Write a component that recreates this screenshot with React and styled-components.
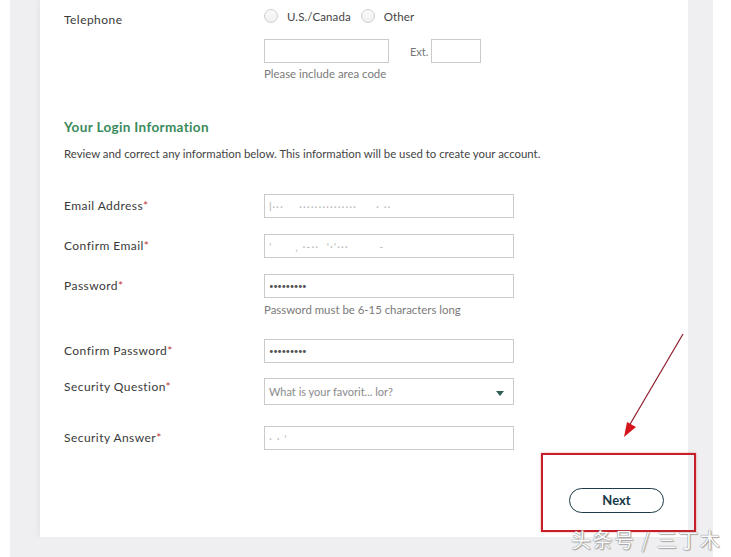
import React from 'react'
import styled, { createGlobalStyle } from 'styled-components'

const GlobalStyle = createGlobalStyle`
    html, body {
        margin: 0;
        padding: 0;
        background: #fff;
    }
    body {
        font-family: Lato, "Open Sans", Arial, sans-serif;
        color: #3b3b3b;
    }
`;

const Page = styled.div`
    position: relative;
    width: 731px;
    height: 557px;
    overflow: hidden;
`;

const Backdrop = styled.div`
    margin-left: 10px;
    width: 703px;
    height: 557px;
    background: #efeef0;
`;

const Panel = styled.div`
    margin-left: 30px;
    width: 648px;
    height: 537px;
    background: #fff;
    box-shadow: -3px 0 3px rgba(0, 0, 0, 0.03);
    padding: 9px 24px 0 24px;
    box-sizing: border-box;
`;

const Row = styled.div`
    display: grid;
    grid-template-columns: 200px 250px;
    align-items: ${p => p.$top ? 'start' : 'center'};
    margin-top: ${p => p.$mt || 0}px;
`;

const Label = styled.div`
    font-size: 12px;
    line-height: 16px;
    letter-spacing: 0.45px;
    color: #3a3a3a;
    padding-top: ${p => p.$pt || 0}px;
    span {
        color: #c23a3a;
    }
`;

const Field = styled.div`
    display: flex;
    flex-direction: column;
`;

const RadioGroup = styled.div`
    display: flex;
    align-items: center;
    height: 14px;
`;

const Radio = styled.span`
    width: 14px;
    height: 14px;
    border-radius: 50%;
    border: 1px solid #cfcfcf;
    box-sizing: border-box;
    background: linear-gradient(#fafafa, #f0f0f0);
    margin-right: 9px;
`;

const RadioText = styled.span`
    font-size: 11.5px;
    letter-spacing: 0.1px;
    color: #444;
    margin-right: 10px;
`;

const PhoneLine = styled.div`
    display: flex;
    align-items: center;
    margin-top: 16px;
`;

const Input = styled.div`
    width: ${p => p.$w || 250}px;
    height: ${p => p.$h || 24}px;
    border: 1px solid #cbcbcb;
    box-sizing: border-box;
    background: #fff;
    display: flex;
    align-items: center;
    padding: 0 6px 0 4px;
    font-size: ${p => p.$fs || 11}px;
    color: ${p => p.$c || '#555'};
    letter-spacing: ${p => p.$ls || 0}px;
    white-space: nowrap;
    overflow: hidden;
`;

const Ext = styled.span`
    font-size: 11px;
    color: #777;
    margin: 0 3px 0 21px;
`;

const Help = styled.div`
    font-size: 11.4px;
    line-height: 16px;
    color: #7a7a7a;
    margin-top: ${p => p.$mt || 3}px;
`;

const Heading = styled.h2`
    margin: 37px 0 0 0;
    font-size: 13.5px;
    line-height: 16px;
    font-weight: 700;
    color: #3b8a5c;
    letter-spacing: 0.35px;
`;

const Intro = styled.p`
    margin: 11px 0 0 0;
    font-size: 11.4px;
    line-height: 16px;
    color: #444;
`;

const Select = styled(Input)`
    justify-content: space-between;
    padding-right: 9px;
`;

const Caret = styled.span`
    width: 0;
    height: 0;
    border-left: 4px solid transparent;
    border-right: 4px solid transparent;
    border-top: 5px solid #2c5e54;
    margin-top: 3px;
`;

const Footer = styled.div`
    display: flex;
    justify-content: flex-end;
    margin-top: 38px;
`;

const NextButton = styled.button`
    width: 95px;
    height: 25px;
    border-radius: 13px;
    border: 1.5px solid #1e3a48;
    background: #fff;
    font-family: Lato, "Open Sans", Arial, sans-serif;
    font-weight: 700;
    font-size: 13px;
    line-height: 20px;
    color: #163848;
    padding: 0 0 2px 0;
`;

const Highlight = styled.div`
    position: absolute;
    left: 541px;
    top: 453px;
    width: 155px;
    height: 79px;
    border: 2px solid #c61f29;
    box-sizing: border-box;
    box-shadow: 0 0 2px rgba(220, 60, 60, 0.5);
`;

const Arrow = styled.svg`
    position: absolute;
    left: 615px;
    top: 330px;
`;

const Watermark = styled.div`
    position: absolute;
    left: 571px;
    top: 525px;
    font-family: "Noto Sans CJK SC", sans-serif;
    font-size: 20px;
    letter-spacing: 1.5px;
    color: #fbfbfb;
    text-shadow: 0 0 1px #8a8a8a, 0 0 1px #8a8a8a, 1px 1px 1px #aaa;
    white-space: nowrap;
`;

const Faint = styled.span`
    color: #bdbdbd;
    letter-spacing: 1px;
`;

function App() {
    return (
        <Page>
            <GlobalStyle />
            <Backdrop>
                <Panel>
                    <Row $top>
                        <Label $pt={3}>Telephone</Label>
                        <Field>
                            <RadioGroup>
                                <Radio />
                                <RadioText>U.S./Canada</RadioText>
                                <Radio />
                                <RadioText>Other</RadioText>
                            </RadioGroup>
                            <PhoneLine>
                                <Input $w={125} />
                                <Ext>Ext.</Ext>
                                <Input $w={50} />
                            </PhoneLine>
                            <Help>Please include area code</Help>
                        </Field>
                    </Row>

                    <Heading>Your Login Information</Heading>
                    <Intro>Review and correct any information below. This information will be used to create your account.</Intro>

                    <Row $mt={32}>
                        <Label>Email Address<span>*</span></Label>
                        <Input><Faint>l··· &nbsp; &nbsp;··············· &nbsp; &nbsp; · ··</Faint></Input>
                    </Row>
                    <Row $mt={16}>
                        <Label>Confirm Email<span>*</span></Label>
                        <Input><Faint>' &nbsp; &nbsp; &nbsp;, ·-·· &nbsp;'·'··· &nbsp; &nbsp; &nbsp; &nbsp;-</Faint></Input>
                    </Row>
                    <Row $mt={16} $top>
                        <Label $pt={4}>Password<span>*</span></Label>
                        <Field>
                            <Input $fs={8} $ls={-0.5}>•••••••••</Input>
                            <Help $mt={4}>Password must be 6-15 characters long</Help>
                        </Field>
                    </Row>
                    <Row $mt={21}>
                        <Label>Confirm Password<span>*</span></Label>
                        <Input $fs={8} $ls={-0.5}>•••••••••</Input>
                    </Row>
                    <Row $mt={15} $top>
                        <Label $pt={1}>Security Question<span>*</span></Label>
                        <Select $h={27} $c="#8a8a8a">
                            <span>What is your favorit... lor?</span>
                            <Caret />
                        </Select>
                    </Row>
                    <Row $mt={21}>
                        <Label>Security Answer<span>*</span></Label>
                        <Input><Faint>· · '</Faint></Input>
                    </Row>

                    <Footer>
                        <NextButton>Next</NextButton>
                    </Footer>
                </Panel>
            </Backdrop>

            <Highlight />
            <Arrow width="80" height="115" viewBox="0 0 80 115">
                <line x1="68" y1="4" x2="14" y2="96" stroke="#8e1b2b" strokeWidth="1.2" />
                <polygon points="9,107 12,92 21,97" fill="#d4161c" />
            </Arrow>
            <Watermark>头条号 / 三丁木</Watermark>
        </Page>
    )
}

export default App;
